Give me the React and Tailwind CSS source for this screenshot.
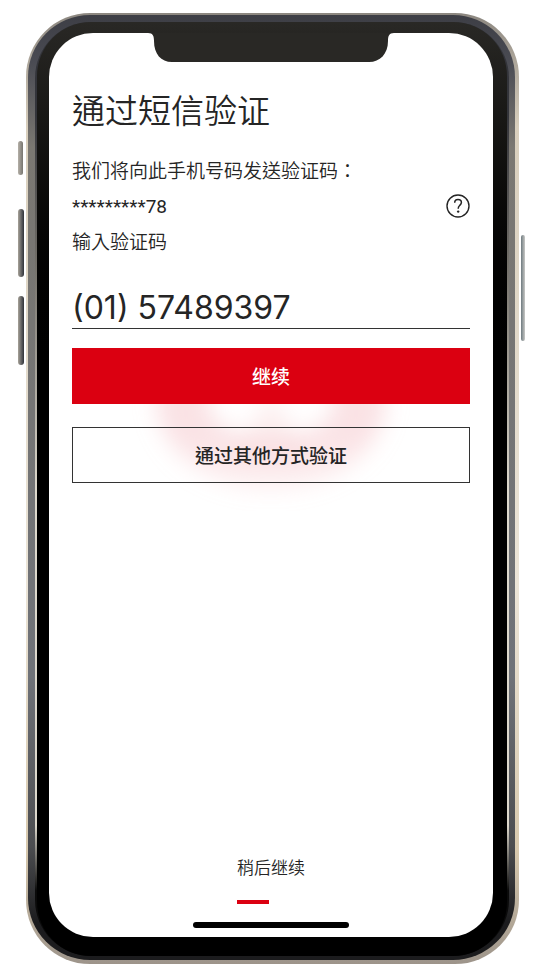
const hardwareKeys = [
  "left-[18px] top-[141px] h-[34px] w-[5px] from-[#b5b0a8] to-[#77756f]",
  "left-[18px] top-[209px] h-[68px] w-[6px] from-[#a9a49a] to-[#30333a]",
  "left-[18px] top-[296px] h-[69px] w-[6px] from-[#a9a49a] to-[#30333a]",
  "right-[10px] top-[235px] h-[106px] w-1 from-[#6f7b80] to-[#c9c9c6]",
];

function Notch() {
  return (
    <svg
      viewBox="0 0 246 29"
      className="absolute left-1/2 top-0 h-[29px] w-[246px] -translate-x-1/2"
      aria-hidden="true"
    >
      <path
        d="M0 0H246C241 0 240 3 240 8C240 21 232 29 221 29H24C13 29 6 21 6 8C6 3 5 0 0 0Z"
        fill="#292825"
      />
    </svg>
  );
}

function HelpIcon() {
  return (
    <svg viewBox="0 0 24 24" className="h-6 w-6" fill="none" aria-hidden="true">
      <circle cx="12" cy="12" r="11" stroke="#252525" strokeWidth="1.4" />
      <path
        d="M8.7 8.7C8.7 6.8 10.1 5.5 12 5.5s3.4 1.2 3.4 3c0 1.5-.9 2.2-1.8 3-.9.8-1.4 1.5-1.4 3.2"
        stroke="#252525"
        strokeWidth="1.5"
      />
      <circle cx="12.2" cy="17.6" r="1.2" fill="#252525" />
    </svg>
  );
}

// Soft logo shape that shows through between the buttons
function Glow() {
  return (
    <svg
      viewBox="0 0 320 200"
      className="absolute left-1/2 top-[300px] h-[200px] w-[320px] -translate-x-1/2"
      aria-hidden="true"
    >
      <defs>
        <filter id="glow-blur" x="-20%" y="-20%" width="140%" height="140%">
          <feGaussianBlur stdDeviation="11" />
        </filter>
        <linearGradient id="glow-fade" x1="0" y1="0" x2="0" y2="1">
          <stop offset="0.5" stopColor="#f6c6cb" stopOpacity="0.5" />
          <stop offset="1" stopColor="#f6c6cb" stopOpacity="0.25" />
        </linearGradient>
      </defs>
      <g filter="url(#glow-blur)">
        <path
          d="M46 50H98V80C112 96 132 106 160 106S208 96 222 80V50H274V80C264 122 222 156 160 156S56 122 46 80Z"
          fill="url(#glow-fade)"
        />
        <path d="M160 60L200 125H120Z" fill="#f6c6cb" opacity="0.3" />
      </g>
    </svg>
  );
}

export default function App() {
  return (
    <div className="relative min-h-screen bg-white pb-3 pl-[26px] pr-4 pt-[13px] font-['Inter','Noto_Sans_CJK_TC',sans-serif] text-[#252525]">
      {hardwareKeys.map((key) => (
        <span key={key} className={`absolute rounded-sm bg-linear-to-r ${key}`} />
      ))}

      {/* Phone body: rim, steel band, inner edge, bezel, screen */}
      <div className="rounded-[64px] bg-[linear-gradient(to_bottom,#8c8780,#d9cfbd_12%,#ece5d8_60%,#d8c9ae_88%,#9d948a)] pb-1 pl-[2px] pr-1 pt-[2px]">
        <div className="rounded-[62px] bg-[linear-gradient(to_bottom,#3d3e45,#4a4b53_5%,#7b7872_14%,#6f7278_70%,#4c4d50_88%,#1c1c1e_96%)] pb-1 pl-[7px] pr-[6px] pt-[7px]">
          <div className="rounded-[56px] bg-[linear-gradient(to_bottom,#33343a_10%,#6f6c66_25%,#ddd8cc_50%,#ddd8cc_86%,#0a0a0a_93%)] px-[2px]">
            <div className="rounded-[54px] bg-linear-to-b from-[#292825] to-black to-40% pb-[19px] pl-3 pr-[14px] pt-[11px]">
              <div className="relative flex min-h-[calc(100vh-72px)] flex-col overflow-hidden rounded-[44px] bg-white px-[23px]">
                <Notch />
                <Glow />

                <form className="relative flex flex-col pt-[57px]" onSubmit={(e) => e.preventDefault()}>
                  <h1 className="text-[33px] font-[350] leading-[42px]">通过短信验证</h1>
                  <p className="mt-[22px] text-[19px] font-[350] leading-9">我们将向此手机号码发送验证码：</p>
                  <div className="flex h-[35px] items-center justify-between">
                    <span className="font-['Roboto',sans-serif] text-[19px]">*********78</span>
                    <button type="button" aria-label="?" className="cursor-pointer pb-1">
                      <HelpIcon />
                    </button>
                  </div>
                  <label htmlFor="code" className="text-[19px] font-[350] leading-9">
                    输入验证码
                  </label>
                  <input
                    id="code"
                    type="text"
                    inputMode="numeric"
                    defaultValue="(01) 57489397"
                    className="mt-6 h-11 w-full border-b border-[#333] pt-[2px] text-[32px] outline-none"
                  />
                  <button type="submit" className="mt-[19px] h-14 bg-[#db0011] pt-1 text-[19px] font-medium text-white">
                    继续
                  </button>
                  <button type="button" className="mt-[23px] h-14 border border-[#333] pt-1 text-[19px] font-medium">
                    通过其他方式验证
                  </button>
                </form>

                <div className="relative mt-auto flex flex-col items-center pb-[9px]">
                  <button type="button" className="text-[17px] font-[350] leading-6">
                    稍后继续
                  </button>
                  <span className="mr-9 mt-5 h-1 w-8 bg-[#db0011]" />
                  <span className="mt-[18px] h-[6px] w-[156px] rounded-full bg-black" />
                </div>
              </div>
            </div>
          </div>
        </div>
      </div>
    </div>
  );
}
